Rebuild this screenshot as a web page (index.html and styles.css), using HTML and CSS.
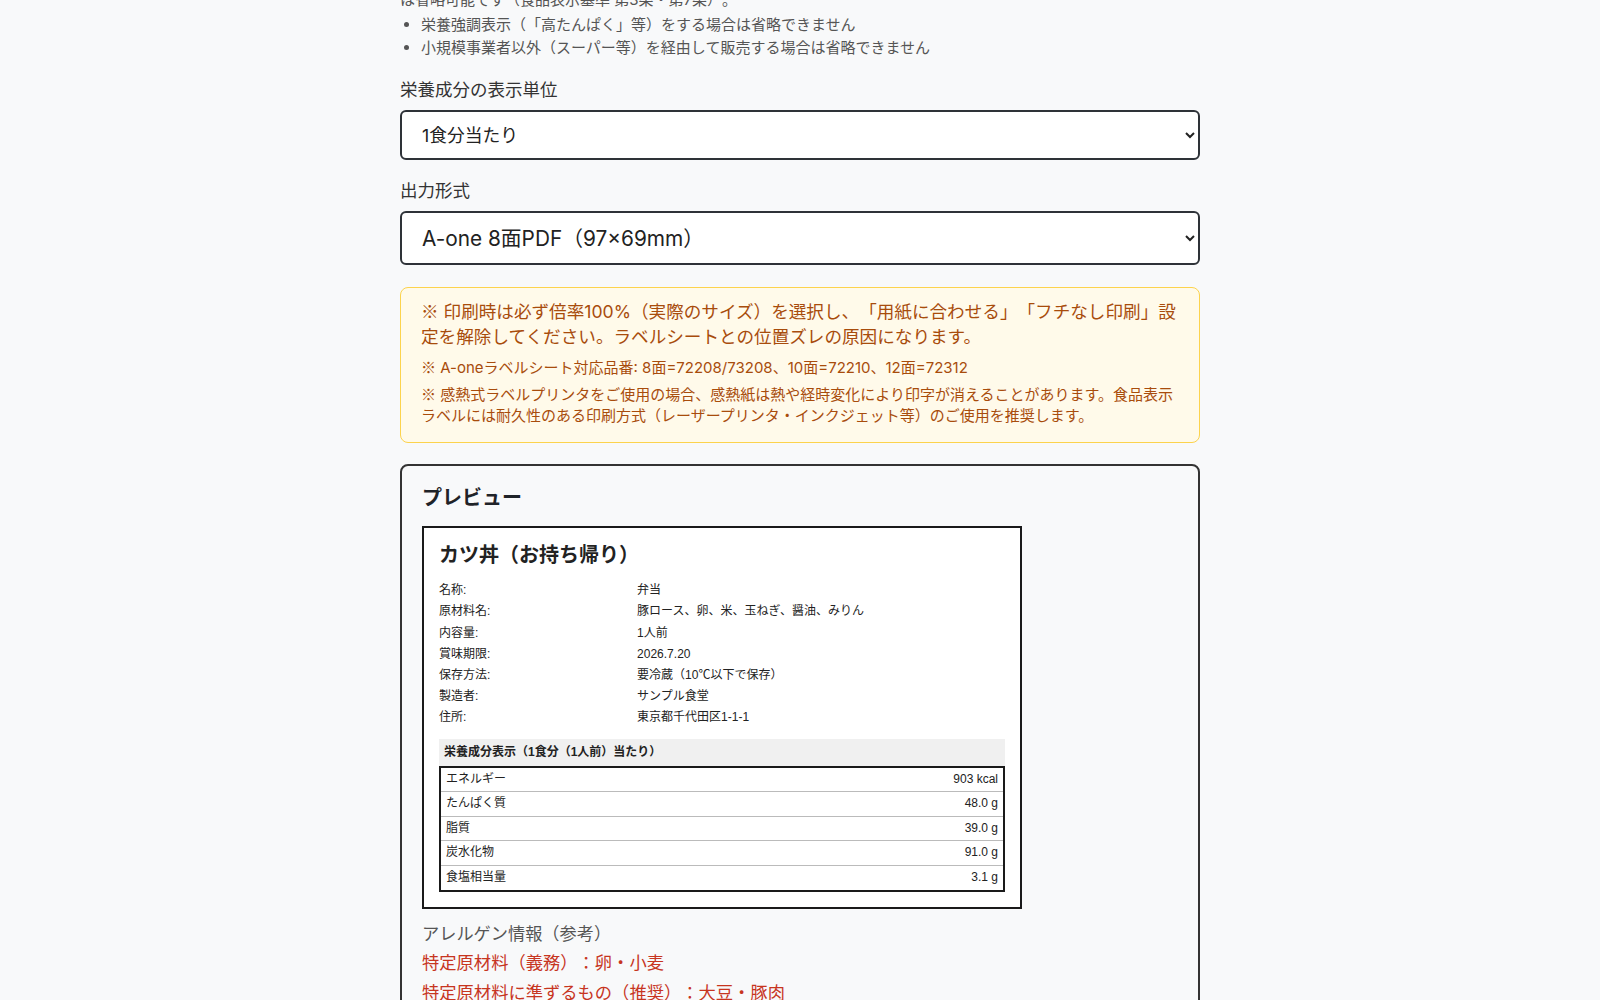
FILE: index.html
```
<!DOCTYPE html>
<html lang="ja">
<head>
  <meta charset="UTF-8" />
  <meta name="viewport" content="width=device-width, initial-scale=1.0"/>
  <title>食品表示ラベル作成</title>
  <link rel="stylesheet" href="styles.css">
</head>
<body>
  <main class="container">
    <!-- 栄養成分表示の省略条件 -->
    <div class="exempt-note">
      <p>小規模事業者が販売する食品は、一定の条件を満たす場合に栄養成分表示<br>は省略可能です（食品表示基準 第3条・第7条）。</p>
      <ul>
        <li>栄養強調表示（「高たんぱく」等）をする場合は省略できません</li>
        <li>小規模事業者以外（スーパー等）を経由して販売する場合は省略できません</li>
      </ul>
    </div>

    <div class="field">
      <label for="unit">栄養成分の表示単位</label>
      <select id="unit">
        <option>1食分当たり</option>
        <option>100g当たり</option>
      </select>
    </div>

    <div class="field">
      <label for="format">出力形式</label>
      <select id="format" class="select-lg">
        <option>A-one 8面PDF（97×69mm）</option>
        <option>A-one 10面PDF</option>
        <option>A-one 12面PDF</option>
      </select>
    </div>

    <!-- 印刷時の注意 -->
    <div class="print-notice">
      <p class="notice-main"><span class="kome">※</span> 印刷時は必ず倍率100%（実際のサイズ）を選択し、「用紙に合わせる」「フチなし印刷」設定を解除してください。ラベルシートとの位置ズレの原因になります。</p>
      <p class="notice-sub"><span class="kome">※</span> A-oneラベルシート対応品番: 8面=72208/73208、10面=72210、12面=72312</p>
      <p class="notice-sub"><span class="kome">※</span> 感熱式ラベルプリンタをご使用の場合、感熱紙は熱や経時変化により印字が消えることがあります。食品表示ラベルには耐久性のある印刷方式（レーザープリンタ・インクジェット等）のご使用を推奨します。</p>
    </div>

    <!-- プレビュー -->
    <section class="preview">
      <h2>プレビュー</h2>
      <div class="food-label">
        <h3>カツ丼（お持ち帰り）</h3>
        <table class="info-table">
          <tr><td>名称:</td><td>弁当</td></tr>
          <tr><td>原材料名:</td><td>豚ロース、卵、米、玉ねぎ、醤油、みりん</td></tr>
          <tr><td>内容量:</td><td>1人前</td></tr>
          <tr><td>賞味期限:</td><td>2026.7.20</td></tr>
          <tr><td>保存方法:</td><td>要冷蔵（10℃以下で保存）</td></tr>
          <tr><td>製造者:</td><td>サンプル食堂</td></tr>
          <tr><td>住所:</td><td>東京都千代田区1-1-1</td></tr>
        </table>
        <div class="nutrition-title">栄養成分表示（1食分（1人前）当たり）</div>
        <table class="nutrition-table">
          <tr><td>エネルギー</td><td>903 kcal</td></tr>
          <tr><td>たんぱく質</td><td>48.0 g</td></tr>
          <tr><td>脂質</td><td>39.0 g</td></tr>
          <tr><td>炭水化物</td><td>91.0 g</td></tr>
          <tr><td>食塩相当量</td><td>3.1 g</td></tr>
        </table>
      </div>

      <div class="allergen">
        <p class="allergen-head">アレルゲン情報（参考）</p>
        <p class="allergen-item">特定原材料（義務）：卵・小麦</p>
        <p class="allergen-item">特定原材料に準ずるもの（推奨）：大豆・豚肉</p>
      </div>
    </section>
  </main>
</body>
</html>
```

FILE: styles.css
```
body {
  font-family: Inter, "Noto Sans CJK JP", sans-serif;
  margin: 0;
  padding: 0;
  background: #f8f9fa;
  color: #333;
  text-spacing-trim: space-all;
}

.container {
  width: 800px;
  margin: -34px auto 40px;
}

/* 省略条件 */
.exempt-note {
  font-size: 15px;
  line-height: 22.5px;
  color: #555;
}

.exempt-note p {
  margin: 0;
}

.exempt-note ul {
  margin: 3px 0 0;
  padding-left: 21px;
}

/* フォーム */
.field {
  margin-top: 18px;
}

.field label {
  display: block;
  font-size: 17.5px;
  line-height: 25px;
  margin-bottom: 8px;
  color: #333;
}

.field select {
  display: block;
  width: 100%;
  height: 50px;
  padding: 0 12px 0 16px;
  font-family: inherit;
  font-size: 17.8px;
  color: #222;
  background: white;
  border: 2px solid #2e3238;
  border-radius: 6px;
}

.field .select-lg {
  height: 54px;
  font-size: 20.8px;
}

/* 印刷時の注意 */
.print-notice {
  margin-top: 22px;
  padding: 12px 20px 16px;
  background: #fffaea;
  border: 1px solid #fcd34d;
  border-radius: 8px;
  color: #a84c0c;
}

.print-notice p {
  margin: 0;
}

/* ※ は和文フォントで表示する（行の高さは変えない） */
.kome {
  font-family: "Noto Sans CJK JP", sans-serif;
  line-height: 0;
}

.notice-main {
  font-size: 17.6px;
  line-height: 24.5px;
  margin-bottom: 9px !important;
}

.notice-sub {
  font-size: 15px;
  line-height: 20.4px;
}

.notice-sub + .notice-sub {
  margin-top: 7px !important;
}

/* プレビュー */
.preview {
  margin-top: 21px;
  padding: 20px 20px 30px;
  border: 2px solid #333;
  border-radius: 8px;
}

.preview h2 {
  margin: 0 0 16px;
  font-size: 20px;
  line-height: 24px;
  color: #1f2328;
}

.food-label {
  width: 600px;
  box-sizing: border-box;
  padding: 15px;
  background: white;
  border: 2px solid #1a1a1a;
  font-family: "Liberation Sans", "Noto Sans CJK JP", sans-serif;
  color: #222;
}

.food-label h3 {
  margin: 0 0 13px;
  font-family: Inter, "Noto Sans CJK JP", sans-serif;
  font-size: 20px;
  line-height: 24px;
}

.info-table {
  width: 100%;
  border-collapse: collapse;
  font-size: 12px;
  line-height: 17.2px;
}

.info-table td {
  padding: 2px 0;
}

.info-table td:first-child {
  width: 35%;
}

.nutrition-title {
  margin-top: 10px;
  padding: 6px 5px;
  background: #f0f0f0;
  font-size: 12px;
  line-height: 15px;
  font-weight: bold;
}

.nutrition-table {
  width: 100%;
  border-collapse: collapse;
  border: 2px solid #1a1a1a;
  font-size: 12px;
  line-height: 15.6px;
}

.nutrition-table td {
  padding: 4px 5px;
  border-bottom: 1px solid #bbb;
}

.nutrition-table td:last-child {
  text-align: right;
}

/* アレルゲン */
.allergen {
  margin-top: 12px;
}

.allergen p {
  margin: 0 0 4px;
  line-height: 25.5px;
}

.allergen-head {
  font-size: 17.2px;
  color: #555;
}

.allergen-item {
  font-size: 17.3px;
  color: #c7351f;
}
```
